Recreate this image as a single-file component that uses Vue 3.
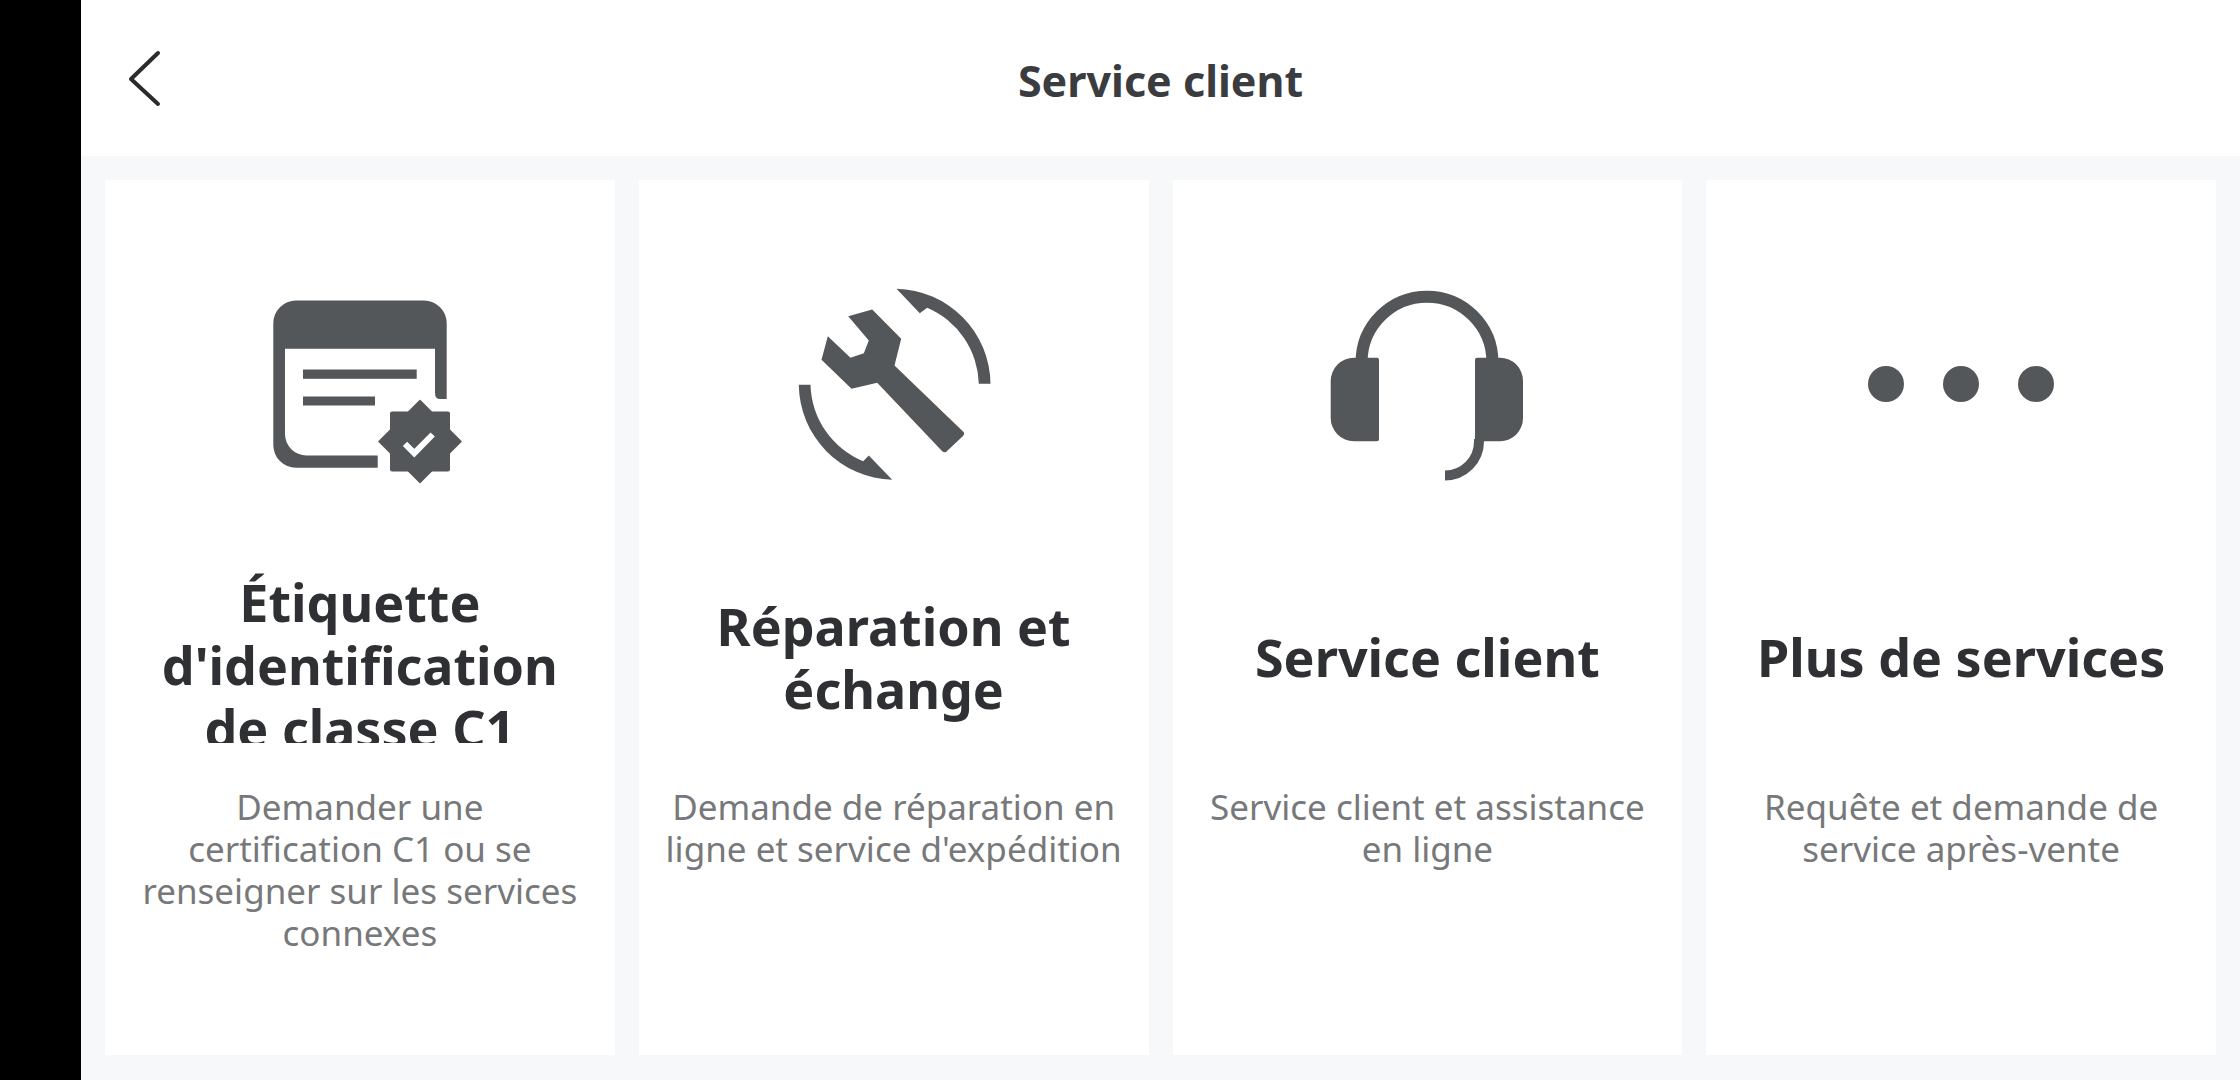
<template>
  <div class="page">
    <aside class="side"></aside>
    <main class="main">
      <header class="top">
        <svg class="back" width="36" height="58" viewBox="0 0 36 58">
          <path d="M32 3 L5 29 L32 54" />
        </svg>
        <h1>Service client</h1>
        <span></span>
      </header>
      <section class="cards">
        <article v-for="card in cards" :key="card.id" class="card">
          <svg class="icon" width="200" height="200" viewBox="0 0 200 200">
            <template v-if="card.id === 'label'">
              <path d="M36 16.5H164A22.7 22.7 0 0 1 186.7 39.2V115H180Q175 115 175 109V64.8H25V150A21.5 21.5 0 0 0 46.5 171.5H117.7V183.8H36A22.7 22.7 0 0 1 13.3 161V39.2A22.7 22.7 0 0 1 36 16.5Z" />
              <rect x="43" y="85.5" width="113.7" height="9.3" />
              <rect x="43" y="112.5" width="72" height="9" />
              <rect x="130" y="127.5" width="60" height="60" rx="2" />
              <path d="M160 116.5L201 157.5L160 198.5L119 157.5Z" stroke="#54575a" stroke-width="1.5" stroke-linejoin="round" />
              <path class="check" d="M145 159.8L154.3 169.2L172.7 150.5" />
            </template>
            <template v-else-if="card.id === 'repair'">
              <path d="M54.2 32.2L78.2 25.5L107.2 54.8L100.5 81.5L169.8 148.2Q171 150 169 152L152 168Q150 169 148 167L83.2 98.8L57.5 104.8L27.5 75.8L33.8 52.2L56.5 73.8L69.8 69.2L74.8 56.5Z" />
              <path d="M102.5 4.8A96 96 0 0 1 196.5 99.8H184.8A85 85 0 0 0 133.2 23.8L125.8 29.2Z" />
              <path d="M4.8 100.8H16.5A85 85 0 0 0 69.2 177.2L74.8 171.5L98.2 195.8A96 96 0 0 1 4.8 100.8Z" />
            </template>
            <template v-else-if="card.id === 'support'">
              <path class="line" stroke-width="12" d="M34.6 78A65.4 65.4 0 0 1 165.4 78" />
              <path d="M27 73.8H50A2 2 0 0 1 52 75.8V155.2A2 2 0 0 1 50 157.2H27A23.3 23.3 0 0 1 3.7 133.9V97.1A23.3 23.3 0 0 1 27 73.8Z" />
              <path d="M173 73.8H150A2 2 0 0 0 148 75.8V155.2A2 2 0 0 0 150 157.2H173A23 23 0 0 0 196 134V97A23 23 0 0 0 173 73.8Z" />
              <path class="line" stroke-width="10" d="M152 155V157.5A34 34 0 0 1 118 191.5" />
            </template>
            <template v-else>
              <circle cx="25" cy="100" r="18" />
              <circle cx="100" cy="100" r="18" />
              <circle cx="175" cy="100" r="18" />
            </template>
          </svg>
          <div class="title-box">
            <h2>{{ card.title }}</h2>
          </div>
          <p>{{ card.desc }}</p>
        </article>
      </section>
    </main>
  </div>
</template>

<script setup>
const cards = [
  {
    id: 'label',
    title: "Étiquette d'identification de classe C1",
    desc: 'Demander une\ncertification C1 ou se renseigner sur les services connexes'
  },
  {
    id: 'repair',
    title: 'Réparation et échange',
    desc: "Demande de réparation en ligne et service d'expédition"
  },
  {
    id: 'support',
    title: 'Service client',
    desc: 'Service client et assistance en ligne'
  },
  {
    id: 'more',
    title: 'Plus de services',
    desc: 'Requête et demande de service après-vente'
  }
]
</script>

<style>
html, body {
  margin: 0;
  background: #000;
}
</style>

<style scoped>
.page {
  display: flex;
  width: 2240px;
  height: 1080px;
  overflow: hidden;
  font-family: "Noto Sans", sans-serif;
}
.side {
  width: 81px;
  flex: none;
  background: #000;
}
.main {
  flex: 1;
  background: #f7f8fa;
  display: flex;
  flex-direction: column;
}
.top {
  height: 156px;
  flex: none;
  background: #fff;
  display: grid;
  grid-template-columns: 1fr auto 1fr;
  align-items: center;
  padding: 0 45px;
}
.back {
  fill: none;
  stroke: #2b2b2b;
  stroke-width: 4;
  stroke-linecap: round;
  stroke-linejoin: round;
  margin-top: 2px;
}
.top h1 {
  margin: 6px 0 0;
  font-size: 43px;
  line-height: 60px;
  font-weight: 700;
  color: #3a3c3f;
}
.cards {
  display: grid;
  grid-template-columns: repeat(4, 1fr);
  gap: 24px;
  padding: 24px 24px 25px;
  flex: 1;
  min-height: 0;
}
.card {
  background: #fff;
  display: flex;
  flex-direction: column;
  align-items: center;
  padding: 104px 24px 0;
  text-align: center;
}
.icon {
  flex: none;
  fill: #54575a;
  overflow: visible;
}
.icon .check {
  fill: none;
  stroke: #fff;
  stroke-width: 6;
}
.icon .line {
  fill: none;
  stroke: #54575a;
}
.title-box {
  width: 100%;
  height: 173px;
  margin-top: 86px;
  display: flex;
  overflow: hidden;
}
.title-box h2 {
  margin: auto;
  font-size: 52px;
  line-height: 63px;
  font-weight: 700;
  color: #2e3033;
}
.card p {
  margin: 43px 0 0;
  font-size: 35px;
  line-height: 42px;
  color: #77787a;
  white-space: pre-line;
}
</style>
